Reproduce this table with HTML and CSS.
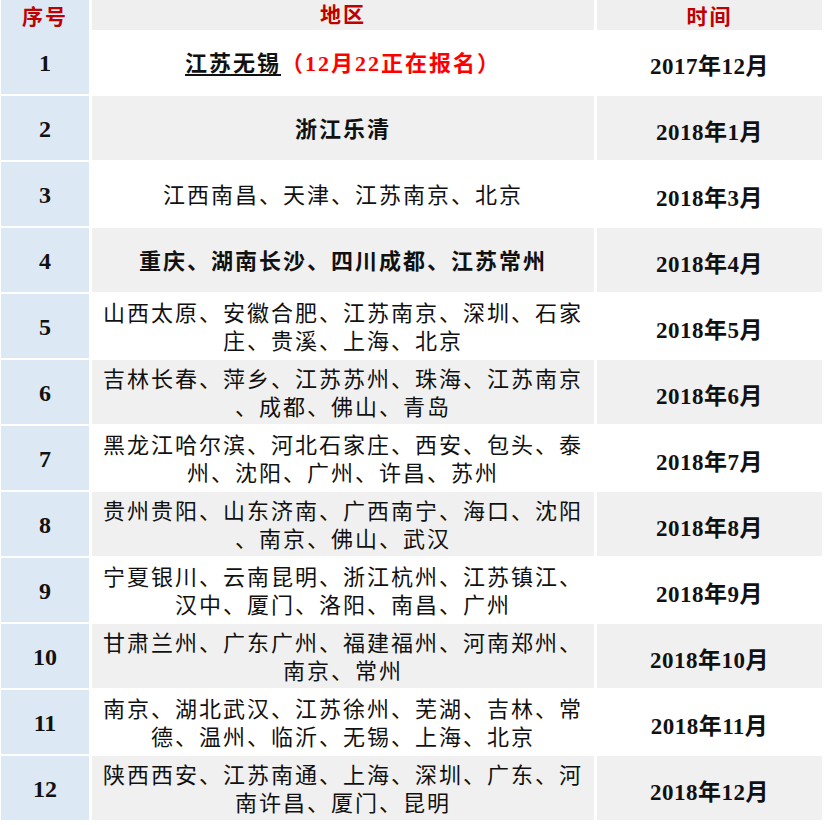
FILE: index.html
```html
<!DOCTYPE html>
<html lang="zh-CN">
<head>
<meta charset="utf-8">
<title>报名安排</title>
<link rel="stylesheet" href="styles.css">
</head>
<body>
<div class="table">
  <div class="row head">
    <div class="cell no">序号</div>
    <div class="cell area">地区</div>
    <div class="cell time">时间</div>
  </div>
  <div class="row odd">
    <div class="cell no">1</div>
    <div class="cell area bold"><span class="u">江苏无锡</span><span class="red">（12月22正在报名）</span></div>
    <div class="cell time">2017年12月</div>
  </div>
  <div class="row even">
    <div class="cell no">2</div>
    <div class="cell area bold">浙江乐清</div>
    <div class="cell time">2018年1月</div>
  </div>
  <div class="row odd">
    <div class="cell no">3</div>
    <div class="cell area">江西南昌、天津、江苏南京、北京</div>
    <div class="cell time">2018年3月</div>
  </div>
  <div class="row even">
    <div class="cell no">4</div>
    <div class="cell area bold">重庆、湖南长沙、四川成都、江苏常州</div>
    <div class="cell time">2018年4月</div>
  </div>
  <div class="row odd">
    <div class="cell no">5</div>
    <div class="cell area">山西太原、安徽合肥、江苏南京、深圳、石家<br>庄、贵溪、上海、北京</div>
    <div class="cell time">2018年5月</div>
  </div>
  <div class="row even">
    <div class="cell no">6</div>
    <div class="cell area">吉林长春、萍乡、江苏苏州、珠海、江苏南京<br>、成都、佛山、青岛</div>
    <div class="cell time">2018年6月</div>
  </div>
  <div class="row odd">
    <div class="cell no">7</div>
    <div class="cell area">黑龙江哈尔滨、河北石家庄、西安、包头、泰<br>州、沈阳、广州、许昌、苏州</div>
    <div class="cell time">2018年7月</div>
  </div>
  <div class="row even">
    <div class="cell no">8</div>
    <div class="cell area">贵州贵阳、山东济南、广西南宁、海口、沈阳<br>、南京、佛山、武汉</div>
    <div class="cell time">2018年8月</div>
  </div>
  <div class="row odd">
    <div class="cell no">9</div>
    <div class="cell area">宁夏银川、云南昆明、浙江杭州、江苏镇江、<br>汉中、厦门、洛阳、南昌、广州</div>
    <div class="cell time">2018年9月</div>
  </div>
  <div class="row even">
    <div class="cell no">10</div>
    <div class="cell area">甘肃兰州、广东广州、福建福州、河南郑州、<br>南京、常州</div>
    <div class="cell time">2018年10月</div>
  </div>
  <div class="row odd">
    <div class="cell no">11</div>
    <div class="cell area">南京、湖北武汉、江苏徐州、芜湖、吉林、常<br>德、温州、临沂、无锡、上海、北京</div>
    <div class="cell time">2018年11月</div>
  </div>
  <div class="row even">
    <div class="cell no">12</div>
    <div class="cell area">陕西西安、江苏南通、上海、深圳、广东、河<br>南许昌、厦门、昆明</div>
    <div class="cell time">2018年12月</div>
  </div>
</div>
</body>
</html>
```
FILE: styles.css
```css
html, body {
  margin: 0;
  padding: 0;
  background: #ffffff;
}

body {
  font-family: "Liberation Serif", "Noto Sans CJK SC", serif;
  color: #111111;
}

.table {
  display: flex;
  flex-direction: column;
  gap: 2px;
  padding-left: 1px;
  width: 821px;
}

.row {
  display: grid;
  grid-template-columns: 88px 502px 225px;
  column-gap: 3px;
  height: 64px;
}

.row.head {
  height: 28px;
}

.cell {
  display: flex;
  align-items: center;
  justify-content: center;
  text-align: center;
  background: #ffffff;
  box-sizing: border-box;
}

.row.even .cell {
  background: #f0f0f0;
}

.cell.no,
.row.even .cell.no {
  background: #dce9f5;
  font-size: 24px;
  font-weight: bold;
  padding-top: 3px;
}

.row.head .cell {
  background: #efefef;
  color: #c00000;
  font-size: 21px;
  font-weight: bold;
  letter-spacing: 2px;
  padding-top: 0;
}

.row.head .cell.no {
  background: #dce9f5;
}

.cell.area {
  font-size: 22px;
  letter-spacing: 2px;
  line-height: 28px;
  padding-top: 4px;
}

.cell.area.bold {
  font-weight: bold;
}

.cell.time {
  font-size: 23px;
  font-weight: bold;
  letter-spacing: 0.5px;
  padding-top: 3px;
}

.u {
  text-decoration: underline;
  text-underline-offset: 3px;
}

.red {
  color: #ff0000;
}
```
